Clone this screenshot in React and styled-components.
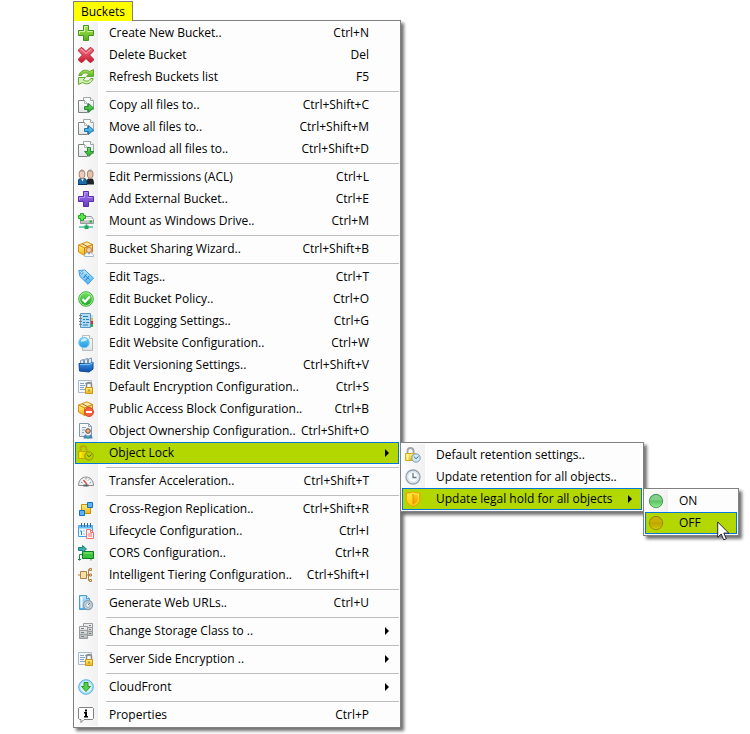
import React from "react";
import styled, { createGlobalStyle, css } from "styled-components";

const GlobalStyle = createGlobalStyle`
  * {
    box-sizing: border-box;
  }
  body {
    margin: 0;
    background: #ffffff;
    color: #000000;
    font-family: "Open Sans", "Noto Sans", sans-serif;
    font-size: 12px;
    line-height: 16px;
  }
`;

//shared gradients, every icon can point to them by id
const Gradient = ({ id, from, to }) => (
  <linearGradient id={id} x1="0" y1="0" x2="0" y2="1">
    <stop offset="0" stopColor={from} />
    <stop offset="1" stopColor={to} />
  </linearGradient>
);

const Gradients = () => (
  <Hidden width="0" height="0" aria-hidden="true">
    <defs>
      <Gradient id="green" from="#b4e85a" to="#52b01c" />
      <Gradient id="red" from="#f2788a" to="#c8182c" />
      <Gradient id="purple" from="#a07ae8" to="#6a3cc4" />
      <Gradient id="blue" from="#6ad0f8" to="#1c9ae0" />
      <Gradient id="sky" from="#c4e8fc" to="#4cb0ec" />
      <Gradient id="navy" from="#3c9cec" to="#0c4ca8" />
      <Gradient id="gold" from="#fff07a" to="#f0b414" />
      <Gradient id="box" from="#fcd878" to="#e89a1c" />
      <Gradient id="paper" from="#ffffff" to="#dfe5e8" />
      <Gradient id="steel" from="#f4f4f4" to="#b4b8b8" />
      <Gradient id="ok" from="#74e060" to="#1ea428" />
      <Gradient id="ballOn" from="#2f9440" to="#8df08a" />
      <Gradient id="ballOff" from="#9c8400" to="#d8c800" />
      <Gradient id="shieldDark" from="#ffc81c" to="#f09c00" />
      <Gradient id="shieldLight" from="#ffe83c" to="#ffc80c" />
    </defs>
  </Hidden>
);

const Pages = () => (
  <>
    <path d="M5.500.5h7l3 3v9h-10z" fill="url(#paper)" stroke="#a0a8a4" />
    <path d="M12.500.5v3h3" fill="#ffffff" stroke="#a0a8a4" />
    <path d="M.5 3.500h6l3 3v9h-9z" fill="url(#paper)" stroke="#7c8480" />
    <path d="M6.500 3.500v3h3" fill="#ffffff" stroke="#b0b8b4" />
  </>
);

const Letter = () => (
  <>
    <path d="M.5 1.500h13v12H.5z" fill="#f4f8fc" stroke="#a8bccc" />
    <path
      d="M2 4.500h4M7 4.500h5M2 6.500h5M2 8.500h4M2 10.500h5"
      stroke="#84a4cc"
    />
  </>
);

const SmallLock = () => (
  <>
    <path
      d="M8.500 8.500V6a2.500 2.500 0 0 1 5 0v2.500"
      fill="none"
      stroke="#8c8c84"
      strokeWidth="1.500"
    />
    <path d="M7.500 8.500h7v6h-7z" fill="url(#gold)" stroke="#c8981c" />
    <path d="M11 10.500v2" stroke="#8c6414" />
  </>
);

const Crate = () => (
  <>
    <path d="M.5 4L9 .8l5.500 2.700-8 3.500z" fill="#fce8a0" stroke="#d4941c" />
    <path d="M.5 4l6 3v7.500l-6-3.500z" fill="url(#gold)" stroke="#d4941c" />
    <path d="M6.500 7l8-3.500v7.500l-8 3.500z" fill="url(#box)" stroke="#cc801c" />
    <path d="M4 2.800l6 3v2.500" fill="none" stroke="#b8741c" />
  </>
);

const icons = {
  create: (
    <>
      <path
        d="M5.500.5h5v5h5v5h-5v5h-5v-5h-5v-5h5z"
        fill="url(#green)"
        stroke="#469422"
      />
      <path d="M6.500 6.500v-5h3M1.500 9V6.500h5M9.500 6.500h5" fill="none" stroke="#d0f49c" />
    </>
  ),
  remove: (
    <>
      <path
        d="M3 .5L4.500 1l3.500 3.500L11.500 1l1.500-.5L15.500 3l-.5 1.500L11.500 8l3.500 3.500.5 1.500-2.500 2.500-1.500-.5L8 11.500 4.500 15l-1.500.5L.5 13l.5-1.500L4.500 8 1 4.500.5 3z"
        fill="url(#red)"
        stroke="#b41c2c"
      />
      <path d="M3 2l5 4.500L13 2" fill="none" stroke="#fca8b0" />
    </>
  ),
  refresh: (
    <>
      <path
        d="M.8 6.500C2 2 7-.5 11.500 2.500l4-2v7H8.500l2.200-2.500C7.500 3 4.500 4 3.500 6.500z"
        fill="url(#green)"
        stroke="#64a834"
      />
      <path
        d="M15.200 9.500c-1.200 4.500-6.200 7-10.700 4l-4 2v-7h7l-2.200 2.500c3.200 2 6.200 1 7.200-1.500z"
        fill="#d4f0b0"
        stroke="#64a834"
      />
    </>
  ),
  copy: (
    <>
      <Pages />
      <path
        d="M6.500 9.500h4v-3l5 4.500-5 4.500v-3h-4z"
        fill="url(#ok)"
        stroke="#2c8c34"
      />
    </>
  ),
  move: (
    <>
      <Pages />
      <path
        d="M6.500 9.500h4v-3l5 4.500-5 4.500v-3h-4z"
        fill="url(#blue)"
        stroke="#2474a8"
      />
    </>
  ),
  download: (
    <>
      <Pages />
      <path
        d="M9.500 6.500h3v4h3l-4.500 5-4.500-5h3z"
        fill="url(#ok)"
        stroke="#2c8c34"
      />
    </>
  ),
  people: (
    <>
      <path d="M8.500 15.500c0-4 .5-5.500 2-6h3.500c1.500.5 2 2 2 6z" fill="#20242c" />
      <ellipse cx="12.200" cy="5.200" rx="2.800" ry="4.200" fill="#e8c0a8" stroke="#a08474" />
      <path d="M0 15.500c0-4 .7-5.800 2.500-6h3.500c2 .2 3 2 3 6z" fill="#1c6cac" stroke="#0c3458" />
      <path d="M3 9.500l1.500 3L6 9.500z" fill="#e8f0f8" />
      <ellipse cx="4" cy="5.200" rx="2.800" ry="4.200" fill="#f0ccb8" stroke="#a08474" />
      <path d="M1.500 3.500C2 .2 6 .2 6.500 3.500 5 2.300 3 2.300 1.500 3.500M9.700 3.500c.5-3.300 4.500-3.300 5 0-1.500-1.200-3.500-1.200-5 0" fill="#a89c98" />
    </>
  ),
  external: (
    <>
      <path
        d="M5.500.5h5v5h5v5h-5v5h-5v-5h-5v-5h5z"
        fill="url(#purple)"
        stroke="#5a2cac"
      />
      <path d="M6.500 6.500v-5h3M1.500 9V6.500h5M9.500 6.500h5" fill="none" stroke="#b898f0" />
    </>
  ),
  mount: (
    <>
      <path d="M4 3.500h9.500l2 3v4h-13v-4z" fill="url(#steel)" stroke="#949c9c" />
      <path d="M3 6.500h12" stroke="#ffffff" />
      <path d="M11.500 8.500h2.500" stroke="#28a83c" strokeWidth="2" />
      <path d="M8.500 11v4M1 14h14" stroke="#48c4a0" strokeWidth="1.500" />
      <path d="M6.500 12.500h4V16h-4z" fill="#20a45c" />
      <path
        d="M2.500.5h3v2h2v3h-2v2h-3v-2h-2v-3h2z"
        fill="#5ce44c"
        stroke="#24a42c"
      />
    </>
  ),
  sharing: (
    <>
      <Crate />
      <path d="M6.500 15.500c0-3 1.500-4 4.500-4s4.500 1 4.500 4z" fill="#f8fcff" stroke="#a0b8cc" />
      <path d="M10 11.500l1 2.500 1-2.500z" fill="#2c84cc" />
      <circle cx="11" cy="9" r="2.500" fill="#f8d4b0" stroke="#b88454" />
    </>
  ),
  tag: (
    <>
      <path
        d="M.8 1.500l6-.5 8.700 8-5.500 6.300L2 7.500z"
        fill="url(#sky)"
        stroke="#3c9cdc"
      />
      <circle cx="3.800" cy="3.800" r="1.200" fill="#ffffff" stroke="#3c9cdc" />
      <path d="M8.500 5l-3 4M11 7l-3.500 4.500M6.500 6l5 4.500" fill="none" stroke="#2484d0" />
    </>
  ),
  policy: (
    <>
      <circle cx="8" cy="8" r="7.300" fill="#b0f0a0" stroke="#3cac3c" />
      <circle cx="8" cy="8" r="6" fill="url(#ok)" />
      <path d="M4.500 8l2.500 2.800 4.800-5.300" fill="none" stroke="#ffffff" strokeWidth="2.200" />
    </>
  ),
  logging: (
    <>
      <path d="M12 2h3v3h-3z" fill="#c8dce8" />
      <path d="M12 5h3v3h-3z" fill="#f0b43c" />
      <path d="M12 8h3v3h-3z" fill="#dc3424" />
      <path d="M12 11h3v3h-3z" fill="#3cac3c" />
      <path d="M2.500.5h10v14h-10z" fill="#b0dcf8" stroke="#5c98c4" />
      <path d="M5 3.500h5M5 6.500h2M8 6.500h3M5 9.500h2M8 9.500h3M5 12h5" stroke="#2c7cbc" />
      <path d="M1 2.500h3M1 5.500h3M1 8.500h3M1 11.500h3" stroke="#787c80" />
    </>
  ),
  website: (
    <>
      <path d="M4.500.5h7l3 3v12h-10z" fill="url(#paper)" stroke="#b8bcc0" />
      <path d="M11.500.5v3h3" fill="#ffffff" stroke="#b8bcc0" />
      <circle cx="6" cy="7.500" r="5.300" fill="url(#blue)" stroke="#84c8f0" />
      <path d="M2.500 6.500c1-4 5.500-4 6.500-2-1 2-5 2-6.500 2z" fill="#c8f0fc" />
    </>
  ),
  versioning: (
    <>
      <path d="M2.500 3.500l3-1v6h-3zM6.500 2.500l3-1v6h-3zM10.500 2l3-1v6h-3z" fill="#dceaf4" stroke="#7c98b0" />
      <path d="M1 6.500l10 .5 4-2v7l-4 3-9.500-1z" fill="url(#navy)" stroke="#0c4890" />
      <path d="M2 7.500h9l4-2" fill="none" stroke="#78c4f8" />
    </>
  ),
  encryption: (
    <>
      <Letter />
      <SmallLock />
    </>
  ),
  block: (
    <>
      <Crate />
      <circle cx="11" cy="11" r="4.500" fill="#f46040" stroke="#dc4828" />
      <path d="M8 11h6" stroke="#ffffff" strokeWidth="2" />
    </>
  ),
  ownership: (
    <>
      <path d="M1.500.5h9l3 3v10h-12z" fill="url(#paper)" stroke="#8098b4" />
      <path d="M10.500.5v3h3M4 4.500h4M4 7h3M4 9.500h2" fill="none" stroke="#8ca4c0" />
      <path d="M5.500 15.500c0-3 1.500-4.500 4.500-4.500s4.500 1.500 4.500 4.500z" fill="#4c80b8" />
      <path d="M8 11l2 4.500 2-4.500z" fill="#ffffff" />
      <path d="M9.500 12h1l.5 3.500H9z" fill="#18a484" />
      <circle cx="10" cy="8" r="2.300" fill="#e8b088" stroke="#704830" />
    </>
  ),
  lock: (
    <>
      <path
        d="M2.500 8V4a3 3 0 0 1 6 0v3"
        fill="none"
        stroke="#a0a2a4"
        strokeWidth="1.800"
      />
      <path d="M.5 6.500h9.500v7H.5z" fill="url(#gold)" stroke="#d4ac20" />
      <path d="M2.500 7v6" stroke="#fffca8" strokeWidth="2" />
      <circle cx="11" cy="11" r="4.200" fill="#d0e8f4" stroke="#7c98a8" />
      <path d="M8.800 9.500l2.200 2.200 2.500-2.200" fill="none" stroke="#4c6c7c" />
    </>
  ),
  lockActive: (
    <>
      <path
        d="M2.500 8V4a3 3 0 0 1 6 0v3"
        fill="none"
        stroke="#c0a800"
        strokeWidth="1.800"
      />
      <path d="M.5 6.500h9.500v7H.5z" fill="#ecd400" stroke="#c0a400" />
      <path d="M2.500 7v6" stroke="#f8f000" strokeWidth="2" />
      <circle cx="11" cy="11" r="4.200" fill="#b8d000" stroke="#889800" />
      <path d="M8.800 9.500l2.200 2.200 2.500-2.200" fill="none" stroke="#606c00" />
    </>
  ),
  gauge: (
    <>
      <path
        d="M.5 12.500C.5 1.200 15.500 1.200 15.500 12.500z"
        fill="#e8e8e8"
        stroke="#8c8c8c"
      />
      <path d="M2.500 11.500C3 3.500 13 3.500 13.500 11.500z" fill="#ffffff" />
      <path d="M3 9.500l1.500.5M8 5v1.500M11 6.500l-1 1M13 9.500l-1.500.5" stroke="#808488" />
      <path d="M9 11.500L5.500 7" stroke="#e05040" strokeWidth="1.500" />
      <path d="M5.500 12.500h5" stroke="#5c6064" strokeWidth="2" />
    </>
  ),
  replication: (
    <>
      <path d="M3.500 3.500h9v9h-9z" fill="url(#gold)" stroke="#c4900c" />
      <path d="M9.500 1.500h5v5h-5z" fill="#58b4fc" stroke="#1c6cc0" />
      <path d="M1.500 9.500h5v5h-5z" fill="#58b4fc" stroke="#1c6cc0" />
    </>
  ),
  lifecycle: (
    <>
      <path d="M.5 2.500h14v11H.5z" fill="#f0faff" stroke="#3ca0e4" />
      <path d="M.5 2.500h14v3H.5z" fill="#68bcf4" />
      <path d="M3.500 0v4M6.500 0v4M9.500 0v4M12.500 0v4" stroke="#346894" />
      <path d="M2 8h1.500v4M6 7.500v1M6 10.500v1" fill="none" stroke="#2488d0" />
      <path d="M8.500 6.500h4l3 3v6h-7z" fill="#fff0f0" stroke="#f07470" />
      <path d="M12.500 6.500v3h3M10 11h4M10 13h4" fill="none" stroke="#f07470" />
    </>
  ),
  cors: (
    <>
      <path d="M4.500 6.500h11v7h-11z" fill="#3cc43c" stroke="#107c20" />
      <path d="M5.500 8h9" stroke="#8cf080" />
      <path d="M4 9.500H1.500v6M0 14.500h3M13 14v1.500" fill="none" stroke="#1c8c3c" />
      <path d="M.5 2.500h4v-2l4 3.500-4 3.500v-2h-4z" fill="#40acac" stroke="#1c8080" />
    </>
  ),
  tiering: (
    <>
      <path d="M2.500 4.500h6v7h-6z" fill="#fce0a0" stroke="#b08048" />
      <path d="M0 8h2M9 8h3M10.500 2.500v11M10.500 2.500H12M10.500 13.500H12" fill="none" stroke="#b08048" />
      <path d="M11.500 1.500h2v2h-2zM11.500 7h2v2h-2zM11.500 12.500h2v2h-2z" fill="#fce0a0" stroke="#b08048" />
    </>
  ),
  urls: (
    <>
      <path d="M1.500.5h7l3 3v11h-10z" fill="url(#sky)" stroke="#4c9cd0" />
      <path d="M8.500.5v3h3" fill="#f4fcff" stroke="#4c9cd0" />
      <path d="M3.500 2v11" stroke="#f4fcff" strokeWidth="2" />
      <circle cx="10" cy="10" r="4.500" fill="#cdd8de" stroke="#8ca0b0" strokeWidth="1.300" />
      <circle cx="10" cy="10" r="2.300" fill="#f0f6f8" stroke="#98acb8" />
      <path d="M10 10l2-2" stroke="#5c7484" />
    </>
  ),
  storage: (
    <>
      <path d="M5.500.5h9v4h-9zM5.500 4.500h9v4h-9zM5.500 8.500h9v4h-9z" fill="url(#steel)" stroke="#989ca0" />
      <path d="M1.500 3.500h8v4h-8zM1.500 7.500h8v4h-8zM1.500 11.500h8v4h-8z" fill="url(#steel)" stroke="#989ca0" />
      <path d="M3 5.500h3M3 9.500h3M3 13.500h3M11 2.500h2M11 6.500h2M11 10.500h2" stroke="#787c80" />
    </>
  ),
  cloud: (
    <>
      <circle cx="8" cy="8" r="7.300" fill="#a4dcf8" stroke="#5cb0e4" />
      <circle cx="8" cy="8" r="5.800" fill="#d8f2fc" />
      <path d="M6 3.500h4v4h2.500L8 12.500l-4.500-5H6z" fill="#5cd044" stroke="#28962c" />
    </>
  ),
  info: (
    <>
      <path
        d="M1.500.5h13l1 1v10l-1 1H6l-3 3v-3H1.500l-1-1v-10z"
        fill="#ffffff"
        stroke="#808080"
      />
      <path d="M7 2.500h2v2H7zM6 5h3v4h1v1.500H6V9h1V6.500H6z" fill="#000000" />
    </>
  ),
  clock: (
    <>
      <circle cx="8" cy="8" r="7" fill="#e8f0f6" stroke="#94a2b0" strokeWidth="1.300" />
      <circle cx="8" cy="8" r="5.300" fill="#fafcfe" stroke="#d4dce4" />
      <path d="M8 4v4.500h3.500" fill="none" stroke="#64788c" strokeWidth="1.300" />
    </>
  ),
  shield: (
    <>
      <path
        d="M8 .8C6 2 3.500 2 1.200 1.800V8c0 4 3.300 6.300 6.800 7.500 3.500-1.200 6.800-3.500 6.800-7.500V1.800C12.500 2 10 2 8 .8z"
        fill="url(#shieldLight)"
        stroke="#e0a000"
      />
      <path d="M8 3c1.500.8 3 .9 4.800.8V8c0 2.800-2 4.500-4.800 5.500z" fill="url(#shieldDark)" />
      <path d="M8 3v10.500" stroke="#d89800" />
    </>
  ),
  on: (
    <>
      <circle cx="8" cy="8" r="6.700" fill="url(#ballOn)" stroke="#3c8c48" strokeWidth=".8" />
      <path d="M2.200 7.500C2.500 0 13.500 0 13.800 7.500z" fill="#84d088" />
    </>
  ),
  off: (
    <>
      <circle cx="8" cy="8" r="6.700" fill="url(#ballOff)" stroke="#8c8000" strokeWidth=".8" />
      <path d="M2.200 7.500C2.500 0 13.500 0 13.800 7.500z" fill="#c8b400" />
    </>
  ),
};

//each inner array is one block of the menu, a line is drawn between blocks
const bucketMenu = [
  [
    { icon: "create", label: "Create New Bucket..", keys: "Ctrl+N" },
    { icon: "remove", label: "Delete Bucket", keys: "Del" },
    { icon: "refresh", label: "Refresh Buckets list", keys: "F5" },
  ],
  [
    { icon: "copy", label: "Copy all files to..", keys: "Ctrl+Shift+C" },
    { icon: "move", label: "Move all files to..", keys: "Ctrl+Shift+M" },
    { icon: "download", label: "Download all files to..", keys: "Ctrl+Shift+D" },
  ],
  [
    { icon: "people", label: "Edit Permissions (ACL)", keys: "Ctrl+L" },
    { icon: "external", label: "Add External Bucket..", keys: "Ctrl+E" },
    { icon: "mount", label: "Mount as Windows Drive..", keys: "Ctrl+M" },
  ],
  [{ icon: "sharing", label: "Bucket Sharing Wizard..", keys: "Ctrl+Shift+B" }],
  [
    { icon: "tag", label: "Edit Tags..", keys: "Ctrl+T" },
    { icon: "policy", label: "Edit Bucket Policy..", keys: "Ctrl+O" },
    { icon: "logging", label: "Edit Logging Settings..", keys: "Ctrl+G" },
    { icon: "website", label: "Edit Website Configuration..", keys: "Ctrl+W" },
    { icon: "versioning", label: "Edit Versioning Settings..", keys: "Ctrl+Shift+V" },
    { icon: "encryption", label: "Default Encryption Configuration..", keys: "Ctrl+S" },
    { icon: "block", label: "Public Access Block Configuration..", keys: "Ctrl+B" },
    { icon: "ownership", label: "Object Ownership Configuration..", keys: "Ctrl+Shift+O" },
    {
      icon: "lockActive",
      label: "Object Lock",
      active: true,
      more: true,
      width: 244,
      items: [
        [
          { icon: "lock", label: "Default retention settings.." },
          { icon: "clock", label: "Update retention for all objects.." },
          {
            icon: "shield",
            label: "Update legal hold for all objects",
            active: true,
            more: true,
            width: 96,
            items: [
              [
                { icon: "on", label: "ON" },
                { icon: "off", label: "OFF", active: true, pointer: true },
              ],
            ],
          },
        ],
      ],
    },
  ],
  [{ icon: "gauge", label: "Transfer Acceleration..", keys: "Ctrl+Shift+T" }],
  [
    { icon: "replication", label: "Cross-Region Replication..", keys: "Ctrl+Shift+R" },
    { icon: "lifecycle", label: "Lifecycle Configuration..", keys: "Ctrl+I" },
    { icon: "cors", label: "CORS Configuration..", keys: "Ctrl+R" },
    { icon: "tiering", label: "Intelligent Tiering Configuration..", keys: "Ctrl+Shift+I" },
  ],
  [{ icon: "urls", label: "Generate Web URLs..", keys: "Ctrl+U" }],
  [{ icon: "storage", label: "Change Storage Class to ..", more: true }],
  [{ icon: "encryption", label: "Server Side Encryption ..", more: true }],
  [{ icon: "cloud", label: "CloudFront", more: true }],
  [{ icon: "info", label: "Properties", keys: "Ctrl+P" }],
];

const Item = ({ item }) => (
  <Row>
    <ItemButton
      type="button"
      role="menuitem"
      $active={item.active}
      aria-haspopup={item.more ? "menu" : undefined}
      aria-expanded={item.items ? true : undefined}
    >
      <Icon viewBox="0 0 16 16" aria-hidden="true">
        {icons[item.icon]}
      </Icon>
      <Label>{item.label}</Label>
      {item.keys && <Keys>{item.keys}</Keys>}
      {item.more && (
        <Arrow viewBox="0 0 4 8" aria-hidden="true">
          <path d="M0 0l4 4-4 4z" />
        </Arrow>
      )}
    </ItemButton>
    {item.items && (
      <SubMenu>
        <Menu groups={item.items} width={item.width} />
      </SubMenu>
    )}
    {item.pointer && (
      <Pointer viewBox="0 0 13 20" aria-hidden="true">
        <path
          d="M.7 1v15.300l3.500-3.300 2.500 5.800 2.600-1.100-2.500-5.600h5z"
          fill="#ffffff"
          stroke="#24243c"
        />
      </Pointer>
    )}
  </Row>
);

const Menu = ({ groups, width }) => (
  <Panel role="menu" $width={width}>
    {groups.map((group, index) => (
      <React.Fragment key={index}>
        {index > 0 && <Separator role="separator" />}
        {group.map((item) => (
          <Item key={item.label} item={item} />
        ))}
      </React.Fragment>
    ))}
  </Panel>
);

const App = () => {
  return (
    <>
      <GlobalStyle />
      <Gradients />
      <Container>
        <Title type="button" aria-haspopup="menu" aria-expanded="true">
          Buckets
        </Title>
        <Menu groups={bucketMenu} width={328} />
      </Container>
    </>
  );
};

const Hidden = styled.svg`
  position: absolute;
`;

const Container = styled.main`
  display: flex;
  flex-direction: column;
  align-items: flex-start;
  padding: 1px 0 6px 73px;
`;

const Title = styled.button`
  z-index: 1;
  height: 20px;
  margin: 0 0 -1px;
  padding: 0 7px;
  border: 1px solid #808080;
  border-bottom: none;
  background: #ffff00;
  color: inherit;
  font: inherit;
`;

const Panel = styled.ul`
  width: max-content;
  min-width: ${(props) => props.$width}px;
  margin: 0;
  padding: 1px;
  list-style: none;
  border: 1px solid #808080;
  background: linear-gradient(to right, #fcfcfc, #f1f1f1) 1px 1px / 23px
    calc(100% - 2px) no-repeat #fdfdfd;
  box-shadow: 3px 3px 3px rgba(0, 0, 0, 0.55);
`;

const Row = styled.li`
  position: relative;
`;

const ItemButton = styled.button`
  display: flex;
  align-items: center;
  width: 100%;
  height: 22px;
  padding: 0 8px 0 2px;
  border: 1px solid transparent;
  background: none;
  color: inherit;
  font: inherit;
  text-align: left;
  ${(props) =>
    props.$active &&
    css`
      border-color: #0078d7;
      background: #b3d700;
    `}
`;

const Icon = styled.svg`
  flex: none;
  width: 16px;
  height: 16px;
  margin-right: 15px;
`;

const Label = styled.span`
  flex: 1;
  white-space: nowrap;
`;

const Keys = styled.span`
  padding: 0 21px 0 4px;
  white-space: nowrap;
`;

const Arrow = styled.svg`
  flex: none;
  width: 4px;
  height: 8px;
  margin-right: 1px;
`;

const Separator = styled.li`
  height: 6px;
  margin-left: 31px;
  background: linear-gradient(#bdbdbd, #bdbdbd) 0 3px / 100% 1px no-repeat;
`;

const SubMenu = styled.div`
  position: absolute;
  z-index: 2;
  top: 0;
  left: calc(100% + 1px);
`;

const Pointer = styled.svg`
  position: absolute;
  top: 9px;
  right: 7px;
  width: 13px;
  height: 20px;
`;

export default App;
